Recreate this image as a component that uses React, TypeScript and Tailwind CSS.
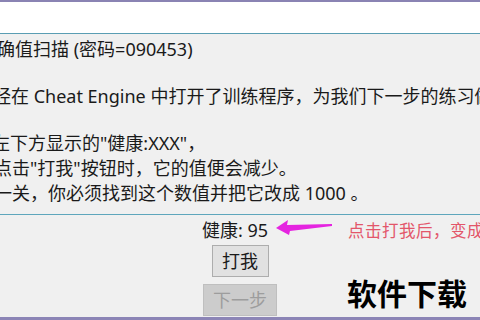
import React from 'react';

const cjk = { fontFamily: '"Noto Sans", "Noto Sans CJK SC", sans-serif' };

export default function App() {
  return (
    <div
      className="relative w-[480px] h-[320px] overflow-hidden flex flex-col bg-[#f0f0f0] text-[#1a1a1a] border-b-[3px] border-[#8c85b6]"
      style={cjk}
    >
      {/* header strip */}
      <div className="h-[34px] shrink-0 bg-white border-t-2 border-t-[#8a83b3] border-b border-b-[#5a9db3]" />

      {/* tutorial text */}
      <div className="h-[181px] shrink-0 border-b border-b-[#5ea6bc] pt-[3px] text-[18px] leading-[25px] whitespace-nowrap">
        <p className="-ml-[3px]">确值扫描 (密码=090453)</p>
        <p className="-ml-[7px] mt-[22px]">经在 Cheat Engine 中打开了训练程序，为我们下一步的练习做</p>
        <p className="-ml-[8px] mt-[22px]">左下方显示的"健康:XXX"，</p>
        <p className="-ml-[6px]">点击"打我"按钮时，它的值便会减少。</p>
        <p className="-ml-[6px]">一关，你必须找到这个数值并把它改成 1000 。</p>
      </div>

      {/* health + buttons */}
      <div className="flex-1 flex flex-col items-center pt-[3px]">
        <div className="text-[18px] leading-[24px] -translate-x-[5px]">健康: 95</div>
        <button className="mt-[3px] w-[57px] h-[32px] bg-[#e1e1e1] border border-[#adadad] text-[18px] leading-none">
          打我
        </button>
        <button
          disabled
          className="mt-[7px] w-[74px] h-[32px] bg-[#cccccc] border border-[#bfbfbf] text-[18px] leading-none text-[#9d9d9d]"
        >
          下一步
        </button>
      </div>

      {/* annotation arrow */}
      <svg className="absolute left-[275px] top-[218px]" width="58" height="18" viewBox="0 0 58 18">
        <polygon points="1,10 13,2 12,7 57,6 57,8 15,13 14,17" fill="#e524e0" />
      </svg>
      <div className="absolute left-[348px] top-[221px] text-[16.5px] leading-[20px] tracking-[0.5px] text-[#e3566a] whitespace-nowrap">
        点击打我后，变成
      </div>

      {/* watermark */}
      <div className="absolute left-[347px] top-[279px] text-[30px] leading-[30px] font-bold text-black whitespace-nowrap">
        软件下载
      </div>
    </div>
  );
}
